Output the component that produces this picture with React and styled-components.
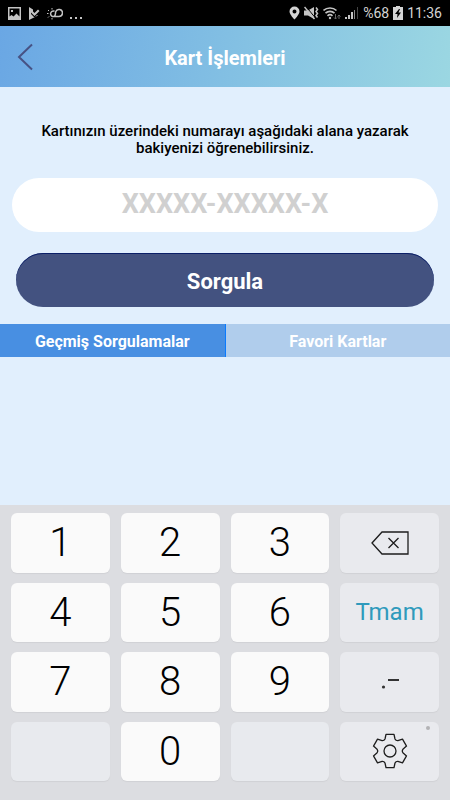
import React, { useState } from 'react';
import styled, { createGlobalStyle } from 'styled-components';

const DIGITS = /^[0-9]$/;

// order follows the rows of the number pad
const keys = [
  { id: '1', label: '1' },
  { id: '2', label: '2' },
  { id: '3', label: '3' },
  { id: 'delete', name: 'Sil' },
  { id: '4', label: '4' },
  { id: '5', label: '5' },
  { id: '6', label: '6' },
  { id: 'done', label: 'Tmam' },
  { id: '7', label: '7' },
  { id: '8', label: '8' },
  { id: '9', label: '9' },
  { id: 'symbols', name: 'Nokta ve tire' },
  { id: 'blank-left' },
  { id: '0', label: '0' },
  { id: 'blank-right' },
  { id: 'settings', name: 'Ayarlar' },
];

const StatusBar = () => (
  <Status>
    <StatusGroup>
      <svg width="13" height="13" viewBox="0 0 13 13">
        <path fill="#c4c4c4" fillRule="evenodd" d="M0 0h13v13H0zM1.500 1.500v8l2-1.500 2 1.500 3-3 3 3v-8zM3 3h2v2H3z" />
      </svg>
      <svg width="12" height="13" viewBox="0 0 12 13">
        <path fill="#c4c4c4" d="M1 0l4 2.500v2L6.500 6 10 2.500l1.500 1.500L6.500 9 3 5.500v1.500l3.500 3.500L9 8l1 .500L1 13z" />
      </svg>
      <svg width="16" height="13" viewBox="0 0 16 13" fill="none" stroke="#c4c4c4">
        <path strokeWidth="1.500" d="M7 9.500h5a3.500 3.500 0 1 0-3.300-4.700C8.200 6.500 9 8.500 7 9.500zM7.500 4.200A2.800 2.800 0 1 0 7 9.500" />
        <path d="M5 1v1.500M5 11v1.500M0 6.500h1.500M1 3l1 1M1 10.500l1-1" />
      </svg>
      <svg width="12" height="13" viewBox="0 0 12 13">
        <path fill="#c4c4c4" d="M0 10h2v2H0zM5 10h2v2H5zM10 10h2v2h-2z" />
      </svg>
    </StatusGroup>
    <StatusGroup $tight>
      <svg width="11" height="14" viewBox="0 0 11 14">
        <path fill="#d4d4d4" fillRule="evenodd" d="M5.500.500A5 5 0 0 0 .500 5.500C.500 8.500 5.500 13.500 5.500 13.500S10.500 8.500 10.500 5.500A5 5 0 0 0 5.500.500zm0 3a2 2 0 1 1 0 4 2 2 0 0 1 0-4z" />
      </svg>
      <svg width="15" height="14" viewBox="0 0 15 14">
        <path fill="#c4c4c4" d="M0 4.500h4L10 1v12L4 9.500H0z" />
        <path stroke="#000" strokeWidth="1" d="M2 .500l9 11" />
        <path stroke="#c4c4c4" strokeWidth="1.500" fill="none" d="M.500 1l10 12" />
        <path stroke="#c4c4c4" strokeWidth="1.500" fill="none" d="M12 1.500l1.500 2-1.500 2 1.500 2-1.500 2 1.500 2" />
      </svg>
      <svg width="18" height="14" viewBox="0 0 18 14" fill="none" stroke="#c4c4c4" strokeWidth="1.600">
        <path d="M.500 4.500a9.500 9.500 0 0 1 13 0M2.500 7.200a6.500 6.500 0 0 1 9 0M4.500 9.900a3.600 3.600 0 0 1 5 0" />
        <circle cx="7" cy="12" r="1.200" fill="#c4c4c4" stroke="none" />
        <path stroke="#666" strokeWidth="1" d="M12.500 8v5M11 11.500l1.500 1.500 1.500-1.500M16 13V9M14.500 10.500L16 9l1.500 1.500" />
      </svg>
      <svg width="14" height="14" viewBox="0 0 14 14">
        <path fill="#c4c4c4" d="M0 11h2v2H0zM3 9h2v4H3zM6 6h2v7H6z" />
        <path fill="#888" d="M9 4h1v9H9z" />
        <path fill="#444" d="M12 1h1v12h-1z" />
      </svg>
      <StatusText>%68</StatusText>
      <svg width="10" height="14" viewBox="0 0 10 14">
        <path fill="#d4d4d4" d="M3 0h4v1h3v13H0V1h3z" />
        <path fill="#000" d="M6 3L2 8h2.500L4 12l4-5.500H5.500L7 3z" />
      </svg>
      <StatusText>11:36</StatusText>
    </StatusGroup>
  </Status>
);

const BackIcon = () => (
  <svg width="16" height="28" viewBox="0 0 16 28" fill="none" stroke="#475284" strokeWidth="2">
    <path d="M15 1.500L2 14l13 12.500" />
  </svg>
);

const DeleteIcon = () => (
  <svg width="38" height="24" viewBox="0 0 38 24" fill="none" stroke="#1d1d1d" strokeWidth="1.300">
    <path d="M1 12L11 1h26v22H11z" />
    <path d="M17.500 7l10 10M27.500 7l-10 10" />
  </svg>
);

const SymbolsIcon = () => (
  <svg width="20" height="14" viewBox="0 0 20 14" fill="#333">
    <circle cx="3.500" cy="12" r="1.600" />
    <path d="M8 4h11v2H8z" />
  </svg>
);

const SettingsIcon = () => (
  <svg width="36" height="36" viewBox="0 0 36 36" fill="none" stroke="#1d1d1d" strokeWidth="1.300" strokeLinejoin="round">
    <path d="M14 1.300H22L23 6Q23.900 7.900 25.900 7.700L30.500 6.200 34.500 13.100 30.900 16.300Q29.700 18 30.900 19.700L34.500 22.900 30.500 29.800 25.900 28.300Q23.900 28.100 23 30L22 34.700H14L13 30Q12.100 28.100 10.100 28.300L5.500 29.800 1.500 22.900 5.100 19.700Q6.300 18 5.100 16.300L1.500 13.100 5.500 6.200 10.100 7.700Q12.100 7.900 13 6Z" />
    <circle cx="18" cy="18" r="6" />
  </svg>
);

const icons = {
  delete: <DeleteIcon />,
  symbols: <SymbolsIcon />,
  settings: <SettingsIcon />,
};

const App = () => {
  const [cardNumber, setCardNumber] = useState('');
  const [tab, setTab] = useState('history');

  const handleKey = (id) => {
    if (DIGITS.test(id)) setCardNumber(cardNumber + id);
    if (id === 'delete') setCardNumber(cardNumber.slice(0, -1));
  };

  return (
    <Screen>
      <GlobalStyle />
      <StatusBar />
      <Header>
        <BackLink href="#" aria-label="Geri">
          <BackIcon />
        </BackLink>
        <Title>Kart İşlemleri</Title>
      </Header>
      <Form onSubmit={(ev) => ev.preventDefault()}>
        <Info htmlFor="card-number">
          Kartınızın üzerindeki numarayı aşağıdaki alana yazarak bakiyenizi öğrenebilirsiniz.
        </Info>
        <CardInput
          id="card-number"
          inputMode="none"
          placeholder="XXXXX-XXXXX-X"
          value={cardNumber}
          onChange={(ev) => setCardNumber(ev.target.value)}
        />
        <SubmitButton type="submit">Sorgula</SubmitButton>
      </Form>
      <Tabs role="tablist">
        <Tab role="tab" aria-selected={tab === 'history'} $active={tab === 'history'} onClick={() => setTab('history')}>
          Geçmiş Sorgulamalar
        </Tab>
        <Tab role="tab" aria-selected={tab === 'favorites'} $active={tab === 'favorites'} onClick={() => setTab('favorites')}>
          Favori Kartlar
        </Tab>
      </Tabs>
      <Keyboard>
        {keys.map((key) => {
          if (!key.label && !key.name) return <BlankKey key={key.id} />;
          const Key = DIGITS.test(key.id) ? DigitKey : ActionKey;
          return (
            <Key key={key.id} type="button" aria-label={key.name} onClick={() => handleKey(key.id)}>
              {key.label || icons[key.id]}
              {key.id === 'settings' && <Dot />}
            </Key>
          );
        })}
      </Keyboard>
    </Screen>
  );
};

const GlobalStyle = createGlobalStyle`
  * {
    box-sizing: border-box;
  }
  body {
    margin: 0;
    font-family: Roboto, sans-serif;
    background-color: #e1effd;
  }
  button, input {
    font-family: inherit;
    border: none;
    padding: 0;
  }
  button {
    cursor: pointer;
  }
  svg {
    display: block;
    flex-shrink: 0;
  }
`;

const Screen = styled.div`
  display: flex;
  flex-direction: column;
  min-height: 100vh;
`;

const Status = styled.div`
  display: flex;
  justify-content: space-between;
  align-items: center;
  height: 26px;
  padding: 0 8px;
  background-color: black;
`;

const StatusGroup = styled.div`
  display: flex;
  align-items: center;
  gap: ${props => props.$tight ? '4px' : '7px'};
`;

const StatusText = styled.span`
  font-size: 14px;
  line-height: 18px;
  color: #d4d4d4;
`;

const Header = styled.header`
  display: grid;
  grid-template-columns: 48px 1fr 48px;
  align-items: center;
  height: 61px;
  background: linear-gradient(100deg, #6aa7e4, #82bfe3 50%, #9bd7e2);
`;

const BackLink = styled.a`
  padding-left: 17px;
`;

const Title = styled.h1`
  margin: 0;
  padding-top: 2px;
  font-size: 20px;
  line-height: 24px;
  font-weight: 700;
  text-align: center;
  color: white;
`;

const Form = styled.form`
  display: flex;
  flex-direction: column;
  padding: 36px 12px 17px;
`;

const Info = styled.label`
  padding: 0 24px;
  margin-bottom: 21px;
  font-size: 15px;
  line-height: 17px;
  font-weight: 500;
  text-align: center;
  color: black;
`;

const CardInput = styled.input`
  width: 100%;
  height: 54px;
  padding-bottom: 2px;
  border-radius: 27px;
  background-color: white;
  font-size: 27px;
  font-weight: 700;
  text-align: center;
  color: #435280;

  &::placeholder {
    color: #d0d0d0;
    opacity: 1;
  }
`;

const SubmitButton = styled.button`
  height: 54px;
  margin: 21px 4px 0;
  padding-top: 2px;
  border-radius: 27px;
  background-color: #435280;
  box-shadow: inset 0 1px 0 #0b1f68;
  font-size: 22px;
  font-weight: 700;
  color: white;
`;

const Tabs = styled.div`
  display: flex;
`;

const Tab = styled.button`
  flex: 1;
  height: 33px;
  padding-top: 2px;
  border-right: ${props => props.$active ? '1px solid #0a7bff' : 'none'};
  background-color: ${props => props.$active ? '#488fe2' : '#b0cdec'};
  font-size: 16px;
  font-weight: 700;
  color: white;
`;

const Keyboard = styled.div`
  display: grid;
  grid-template-columns: repeat(4, 1fr);
  grid-auto-rows: 1fr;
  gap: 10px 11px;
  height: 295px;
  margin-top: auto;
  padding: 8px 11px 19px;
  background-color: #dcdde1;
`;

const BlankKey = styled.div`
  border-radius: 6px;
  background-color: #e8eaee;
  box-shadow: 0 1px 1px #d0d1d5;
`;

const DigitKey = styled.button`
  border-radius: 6px;
  background-color: #fafafa;
  box-shadow: 0 1px 1px #d0d1d5;
  font-size: 40px;
  font-weight: 300;
  color: black;
`;

const ActionKey = styled.button`
  position: relative;
  display: flex;
  justify-content: center;
  align-items: center;
  border-radius: 6px;
  background-color: #e9eaee;
  box-shadow: 0 1px 1px #d0d1d5;
  font-size: 24px;
  color: #2f9abc;
`;

const Dot = styled.span`
  position: absolute;
  top: 4px;
  right: 9px;
  width: 4px;
  height: 4px;
  border-radius: 50%;
  background-color: #b3b3b5;
`;

export default App;
